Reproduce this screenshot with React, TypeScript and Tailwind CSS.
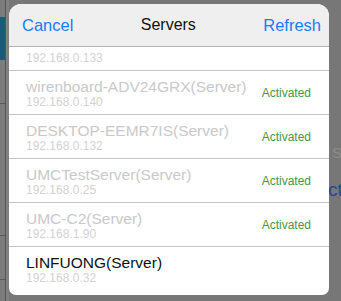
import React from "react";

interface Server {
  name: string;
  ip: string;
  activated: boolean;
}

const SERVERS: Server[] = [
  { name: "DESKTOP-PC(Server)", ip: "192.168.0.133", activated: false },
  { name: "wirenboard-ADV24GRX(Server)", ip: "192.168.0.140", activated: true },
  { name: "DESKTOP-EEMR7IS(Server)", ip: "192.168.0.132", activated: true },
  { name: "UMCTestServer(Server)", ip: "192.168.0.25", activated: true },
  { name: "UMC-C2(Server)", ip: "192.168.1.90", activated: true },
  { name: "LINFUONG(Server)", ip: "192.168.0.32", activated: false },
];

function ServerRow({ server, index, last }: { server: Server; index: number; last: boolean }) {
  // rows that are already activated are shown greyed out
  const dim = server.activated || index === 0;
  return (
    <div
      className={
        "flex h-[44px] shrink-0 items-center justify-between pl-[17px] pr-[18px] " +
        (last ? "h-[48px]" : "border-b border-[#c4c4c4]") +
        (index === 0 ? " -mt-[20px]" : "")
      }
    >
      <div className={"flex flex-col self-start " + (index === 0 ? "pt-[3px]" : "pt-[7px]")}>
        <span
          className={
            "text-[15.5px] leading-[18px] whitespace-nowrap " +
            (dim ? "text-[#c9c9c9]" : "text-[#111]")
          }
        >
          {server.name}
        </span>
        <span
          className={
            "text-[12px] leading-[13px] text-[#d2d2d2] " + (index === 0 ? "mt-[4px]" : "")
          }
        >
          {server.ip}
        </span>
      </div>
      {server.activated && (
        <span className="text-[12px] text-[#3f9a3f]">Activated</span>
      )}
    </div>
  );
}

export default function App() {
  return (
    <div
      className="relative h-[301px] w-[341px] overflow-hidden bg-[#777777]"
      style={{ fontFamily: '"Liberation Sans", Arial, sans-serif' }}
    >
      {/* dimmed page behind the sheet */}
      <div className="absolute left-0 top-0 h-full w-[9px] bg-[#7c7c7c]">
        <div className="absolute left-0 top-[17px] h-[43px] w-[5px] bg-[#1b5b78]" />
        <div className="absolute left-0 top-[103px] h-px w-[5px] bg-[#5a5a5a]" />
        <div className="absolute left-0 top-[235px] h-px w-[5px] bg-[#5a5a5a]" />
        <div className="absolute left-0 top-[279px] h-px w-[5px] bg-[#5a5a5a]" />
        <div className="absolute left-[5px] top-0 h-full w-px bg-[#565656]" />
        <div className="absolute left-[6px] top-0 h-full w-[3px] bg-[#818181]" />
      </div>
      <span className="absolute left-[332px] top-[142px] text-[15px] text-[#8c8c8c]">S</span>
      <span className="absolute left-[328px] top-[176px] text-[19px] text-[#1d4a9a]">ct</span>

      <div className="relative pl-[9px] pt-[4px]">
        <div className="flex h-[291px] w-[320px] flex-col overflow-hidden rounded-t-[12px] rounded-b-[7px] bg-white">
          <div className="flex h-[43px] shrink-0 items-center justify-between border-b border-[#b4b4b4] bg-[#efefef] pl-[13px] pr-[8px]">
            <span className="text-[16.5px] text-[#1a7cf6]">Cancel</span>
            <span className="text-[16px] text-[#111]">Servers</span>
            <span className="text-[16.5px] text-[#1a7cf6]">Refresh</span>
          </div>
          <div className="flex flex-1 flex-col overflow-hidden">
            {SERVERS.map((s, i) => (
              <ServerRow key={s.ip + i} server={s} index={i} last={i === SERVERS.length - 1} />
            ))}
          </div>
        </div>
      </div>
    </div>
  );
}
